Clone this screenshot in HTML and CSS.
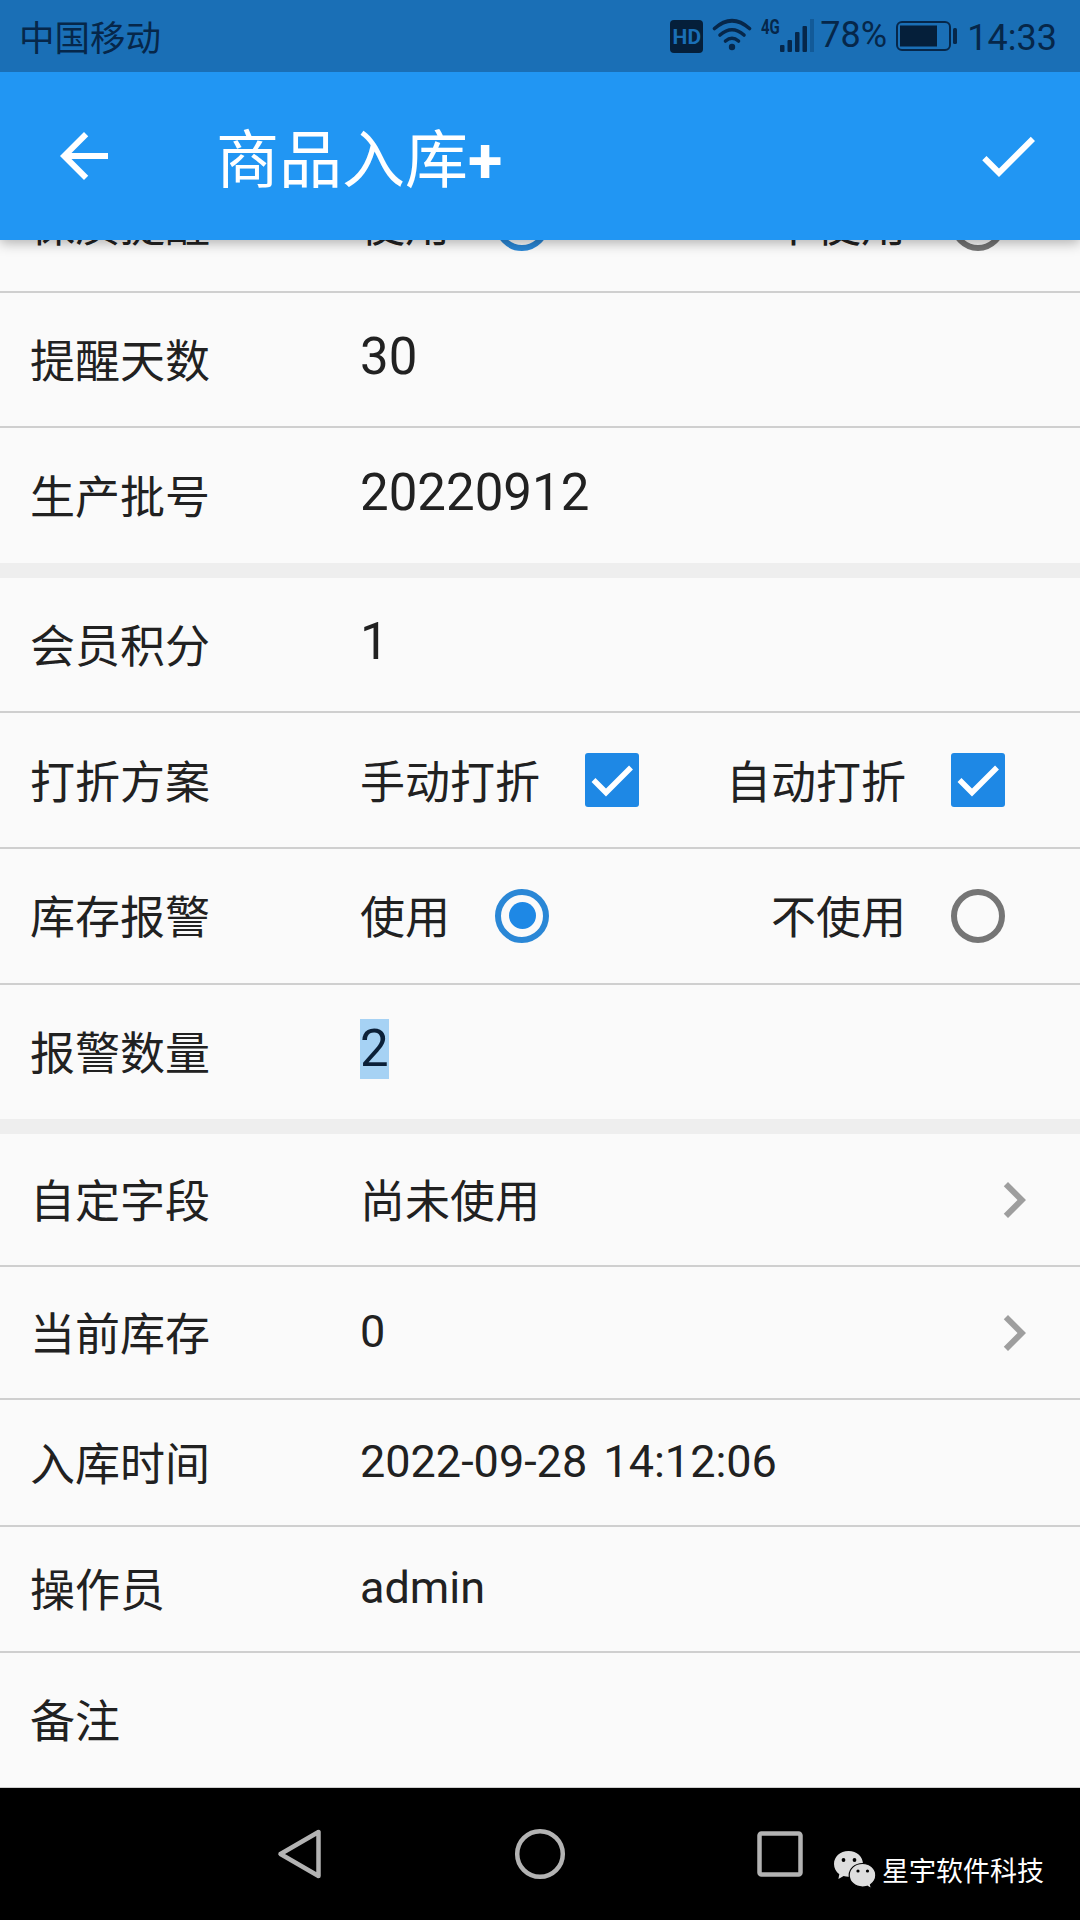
FILE: index.html
```html
<!DOCTYPE html>
<html lang="zh-CN">
<head>
    <meta charset="UTF-8">
    <meta name="viewport" content="width=device-width, initial-scale=1.0">
    <title>商品入库</title>
    <link rel="stylesheet" href="styles.css">
</head>
<body>

    <div class="status-bar">
        <span class="carrier">中国移动</span>
        <div class="status-icons">
            <span class="hd">HD</span>
            <svg class="wifi" width="40" height="34" viewBox="0 0 40 34" fill="none" stroke="#06274a" stroke-width="3.6" stroke-linecap="round">
                <path d="M2.5 10.5Q20-5 37.5 10.5"/>
                <path d="M8 17Q20 6.500 32 17"/>
                <path d="M13.500 23Q20 17.500 26.500 23"/>
                <circle cx="20" cy="29" r="3.200" fill="#06274a" stroke="none"/>
            </svg>
            <span class="network">4G</span>
            <svg class="signal" width="36" height="34" viewBox="0 0 36 34" fill="#06274a">
                <rect x="0" y="26" width="4.500" height="7" rx="1"/>
                <rect x="7.500" y="21" width="4.500" height="12" rx="1"/>
                <rect x="15" y="13" width="4.500" height="20" rx="1"/>
                <rect x="22.500" y="7" width="4.500" height="26" rx="1"/>
                <rect x="30" y="0" width="4" height="33" fill="#125a98"/>
            </svg>
            <span class="percent">78%</span>
            <svg class="battery" width="62" height="30" viewBox="0 0 62 30">
                <rect x="1" y="1" width="53" height="28" rx="5" fill="none" stroke="#06274a" stroke-width="2"/>
                <rect x="4" y="4.500" width="37" height="21" fill="#051f3a"/>
                <rect x="57" y="7" width="4" height="16" rx="1.500" fill="#06274a"/>
            </svg>
            <span class="time">14:33</span>
        </div>
    </div>

    <header class="app-bar">
        <svg class="icon" viewBox="0 0 24 24"><path d="M20 11H7.830l5.590-5.590L12 4l-8 8 8 8 1.410-1.410L7.830 13H20v-2z"/></svg>
        <h1 class="title">商品入库<b>+</b></h1>
        <svg class="icon" viewBox="0 0 24 24"><path d="M9 16.170L4.830 12l-1.420 1.410L9 19 21 7l-1.410-1.410z"/></svg>
    </header>

    <main class="content">
        <div class="form">
            <div class="row">
                <span class="label">保质提醒</span>
                <div class="options">
                    <label class="option"><span>使用</span><span class="radio checked"></span></label>
                    <label class="option"><span>不使用</span><span class="radio"></span></label>
                </div>
            </div>
            <div class="row">
                <span class="label">提醒天数</span>
                <span class="field">30</span>
            </div>
            <div class="row last">
                <span class="label">生产批号</span>
                <span class="field">20220912</span>
            </div>
            <div class="divider"></div>
            <div class="row">
                <span class="label">会员积分</span>
                <span class="field">1</span>
            </div>
            <div class="row">
                <span class="label">打折方案</span>
                <div class="options">
                    <label class="option">
                        <span>手动打折</span>
                        <span class="checkbox"><svg viewBox="0 0 54 54"><path d="M8.500 27l12.500 12.500L46 14.500"/></svg></span>
                    </label>
                    <label class="option">
                        <span>自动打折</span>
                        <span class="checkbox"><svg viewBox="0 0 54 54"><path d="M8.500 27l12.500 12.500L46 14.500"/></svg></span>
                    </label>
                </div>
            </div>
            <div class="row">
                <span class="label">库存报警</span>
                <div class="options">
                    <label class="option"><span>使用</span><span class="radio checked"></span></label>
                    <label class="option"><span>不使用</span><span class="radio"></span></label>
                </div>
            </div>
            <div class="row last">
                <span class="label">报警数量</span>
                <span class="field"><span class="selected">2</span></span>
            </div>
            <div class="divider"></div>
            <div class="row link">
                <span class="label">自定字段</span>
                <span class="value">尚未使用</span>
                <svg class="icon chevron" viewBox="0 0 24 24"><path d="M10 6L8.590 7.410 13.170 12l-4.580 4.590L10 18l6-6z"/></svg>
            </div>
            <div class="row link">
                <span class="label">当前库存</span>
                <span class="value">0</span>
                <svg class="icon chevron" viewBox="0 0 24 24"><path d="M10 6L8.590 7.410 13.170 12l-4.580 4.590L10 18l6-6z"/></svg>
            </div>
            <div class="row info">
                <span class="label">入库时间</span>
                <span class="value">2022-09-28 14:12:06</span>
            </div>
            <div class="row info">
                <span class="label">操作员</span>
                <span class="value">admin</span>
            </div>
            <div class="row">
                <span class="label">备注</span>
            </div>
        </div>
    </main>

    <nav class="nav-bar">
        <svg width="50" height="54" viewBox="0 0 50 54"><path d="M5.500 27L43.500 5v44z"/></svg>
        <svg width="54" height="54" viewBox="0 0 54 54"><circle cx="27" cy="27" r="22.800"/></svg>
        <svg width="50" height="54" viewBox="0 0 50 54"><rect x="4.500" y="6.500" width="41" height="41" rx="2"/></svg>
        <div class="watermark">
            <svg width="44" height="38" viewBox="0 0 44 38">
                <path fill="#dedede" d="M15.500 0C7 0 1 5.800 1 13c0 4.200 2 7.800 5.300 10.200L5.400 28l5.200-3c1.600.5 3.200.7 4.900.7 8.500 0 14.500-5.600 14.500-12.700S24 0 15.500 0z"/>
                <path fill="#dedede" stroke="#000" stroke-width="1.200" d="M29.500 12.500c-7.500 0-13.300 5.200-13.300 11.700s5.800 11.800 13.300 11.800c1.700 0 3.200-.3 4.700-.8l4.300 2.500-1-4c3.100-2.200 5.300-5.600 5.300-9.500 0-6.500-5.800-11.700-13.300-11.700z"/>
                <circle cx="10.500" cy="9" r="1.900"/>
                <circle cx="21.500" cy="9" r="1.900"/>
                <circle cx="25" cy="20" r="1.600"/>
                <circle cx="34.500" cy="20" r="1.600"/>
            </svg>
            <span>星宇软件科技</span>
        </div>
    </nav>

</body>
</html>
```
FILE: styles.css
```css
* {
    box-sizing: border-box;
}

body {
    display: flex;
    flex-direction: column;
    height: 1920px;
    margin: 0;
    background-color: #fafafa;
    color: #212121;
    font-family: Roboto, "Noto Sans CJK SC", sans-serif;
    font-size: 45px;
    overflow: hidden;
}

.status-bar {
    display: flex;
    justify-content: space-between;
    height: 72px;
    padding: 0 23px 0 19px;
    background-color: #1a6fb6;
    color: #06274a;
    font-size: 36px;
    line-height: 72px;
}

.carrier {
    font-size: 35.5px;
    line-height: 78px;
}

.status-icons {
    display: flex;
    align-items: flex-start;
}

.hd {
    width: 33px;
    height: 33px;
    margin: 20px 9px 0 0;
    border-radius: 4px;
    background-color: #051f3a;
    color: #1a6fb6;
    font-size: 21px;
    font-weight: bold;
    line-height: 34px;
    text-align: center;
}

.wifi {
    margin: 18px 9px 0 0;
}

.network {
    width: 19px;
    font-size: 20px;
    font-weight: bold;
    line-height: 20px;
    margin-top: 17px;
    transform: scaleX(0.75);
    transform-origin: left;
}

.signal {
    margin: 19px 4px 0 0;
}

.percent {
    width: 76px;
    line-height: 70px;
}

.battery {
    margin: 21px 9px 0 0;
}

.time {
    line-height: 76px;
}

.app-bar {
    display: flex;
    align-items: center;
    height: 168px;
    padding: 0 36px 0 48px;
    background-color: #2196f3;
    box-shadow: 0 3px 12px rgba(0, 0, 0, 0.3);
    clip-path: inset(0 0 -24px 0);
    z-index: 1;
}

.icon {
    width: 72px;
    height: 72px;
    fill: #fff;
}

.title {
    flex: 1;
    margin: 0 0 0 96px;
    padding-top: 9px;
    color: #fff;
    font-size: 63px;
    font-weight: normal;
    line-height: 80px;
}

.content {
    flex: 1;
    overflow: hidden;
}

/* list is scrolled, first row goes under the app bar */
.form {
    margin-top: -83px;
}

.row {
    display: flex;
    align-items: center;
    height: 135.6px;
    padding: 0 30px;
    border-bottom: 2px solid #cfcfcf;
}

.row.last {
    height: 134.6px;
    border-bottom: none;
}

.row.link {
    height: 133px;
}

.row.info {
    height: 126.5px;
}

.divider {
    height: 15px;
    background-color: #eee;
}

.label {
    width: 330px;
    padding-top: 7px;
    line-height: 66px;
}

.value {
    flex: 1;
    margin-top: -2px;
    word-spacing: 5px;
}

.field {
    margin-top: -5px;
    font-size: 51px;
    line-height: 60px;
}

.selected {
    display: block;
    background-color: #a6d2f4;
    color: #0b2038;
}

.options {
    display: flex;
    flex: 1;
    justify-content: space-between;
    padding-right: 45px;
}

.option {
    display: flex;
    align-items: center;
    line-height: 66px;
}

.option span:first-child {
    padding-top: 7px;
}

.checkbox,
.radio {
    width: 54px;
    height: 54px;
    margin-left: 45px;
}

.checkbox {
    display: block;
    border-radius: 3px;
    background-color: #1e88e5;
}

.checkbox svg {
    display: block;
    fill: none;
    stroke: #fff;
    stroke-width: 5.5;
}

.radio {
    display: flex;
    align-items: center;
    justify-content: center;
    border: 6px solid #757575;
    border-radius: 50%;
}

.radio.checked {
    border-color: #2a87d6;
}

.radio.checked::after {
    content: "";
    width: 27px;
    height: 27px;
    border-radius: 50%;
    background-color: #1e88e5;
}

.chevron {
    fill: #9e9e9e;
}

.nav-bar {
    position: relative;
    display: flex;
    align-items: center;
    justify-content: space-between;
    height: 132px;
    padding: 0 275px;
    background-color: #000;
}

.nav-bar > svg {
    fill: none;
    stroke: #b3b3b3;
    stroke-width: 4.5;
    stroke-linejoin: round;
}

.watermark {
    position: absolute;
    left: 833px;
    top: 63px;
    display: flex;
    color: #fff;
    font-size: 27px;
    line-height: 42px;
}

.watermark span {
    margin-left: 5px;
}
```
